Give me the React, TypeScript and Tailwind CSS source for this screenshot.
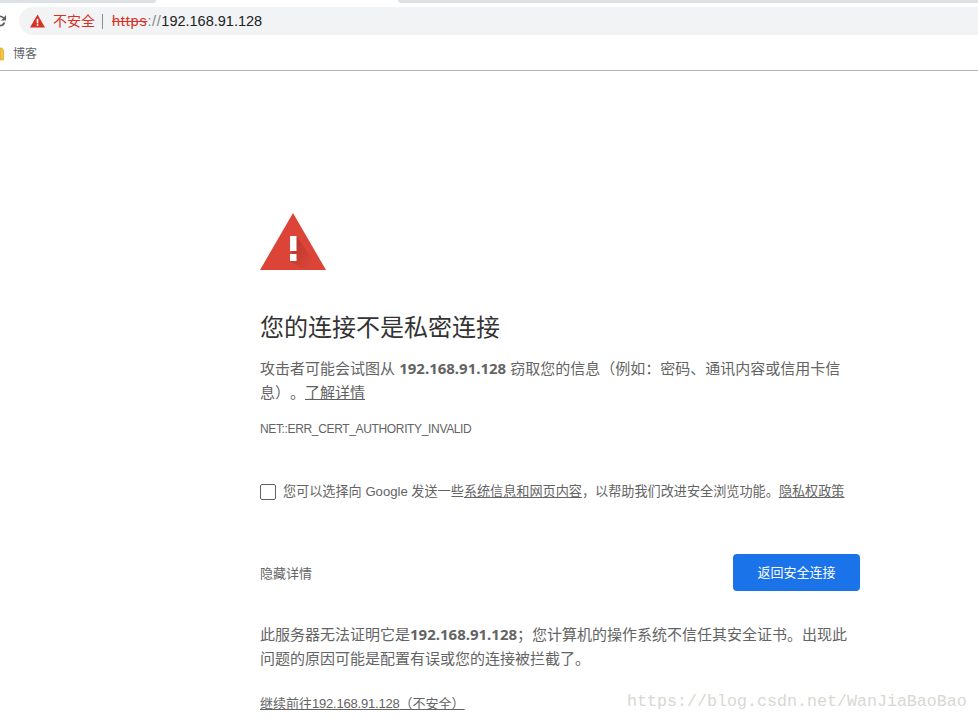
export default function App() {
  const cjk = '"Liberation Sans","Noto Sans CJK SC",sans-serif';
  const bold = '"Noto Sans","Noto Sans CJK SC",sans-serif';
  return (
    <div className="relative w-[978px] h-[721px] overflow-hidden bg-white [text-spacing-trim:space-all]" style={{ fontFamily: cjk }}>
      {/* Browser chrome */}
      <div className="h-[71px] border-b border-[#b3b3b3] bg-white">
        <div className="flex justify-between h-[3px]">
          <div className="w-[156px] rounded-br-md bg-[#dee1e6]" />
          <div className="w-[580px] rounded-bl-md bg-[#dee1e6]" />
        </div>
        <div className="flex items-center h-[28px] mt-[4px]">
          <div className="w-[19px] flex items-center">
            <svg width="6" height="14" viewBox="0 0 6 14" className="block">
              <path d="M0 1.5a5.5 5.5 0 0 1 4 1.7L6 1v5.5H0.8L3 4.6A3.6 3.6 0 0 0 0 3.3ZM0 12.5v-1.8a3.6 3.6 0 0 0 3.4-2.3h2A5.5 5.5 0 0 1 0 12.5Z" fill="#5f6368" />
            </svg>
          </div>
          <div className="flex-1 h-[28px] rounded-l-[14px] bg-[#f1f3f4] flex items-center pl-[11px]">
            <svg width="15" height="14" viewBox="0 0 15 14" className="block shrink-0">
              <path d="M7.5 0.5 15 13.5H0Z" fill="#d93025" />
              <rect x="6.7" y="4.8" width="1.6" height="4.6" fill="#fff" />
              <rect x="6.7" y="10.2" width="1.6" height="1.6" fill="#fff" />
            </svg>
            <span className="ml-[8px] text-[14px] leading-none text-[#d93025]">不安全</span>
            <span className="ml-[7px] w-px h-[15px] bg-[#8a8d91]" />
            <span className="ml-[9px] text-[14.5px] leading-none">
              <span className="text-[#d93025] line-through tracking-[0.8px]">https</span>
              <span className="text-[#80868b] tracking-[0.6px]">://</span>
              <span className="text-[#202124]">192.168.91.128</span>
            </span>
          </div>
        </div>
        <div className="flex items-center h-[35px] pt-[3px]">
          <svg width="4" height="14" viewBox="0 0 4 14" className="block">
            <path d="M0 1h2l1.5 2V13H0Z" fill="#f5c542" stroke="#c9a227" strokeWidth="0.6" />
          </svg>
          <span className="ml-[9px] text-[12px] leading-none text-[#5f6368]">博客</span>
        </div>
      </div>

      {/* Interstitial */}
      <main className="ml-[260px] w-[600px] pt-[142px]">
        <svg width="66" height="58" viewBox="0 0 66 58" className="block">
          <defs>
            <linearGradient id="sh" x1="0.1" y1="0.1" x2="0.9" y2="0.9">
              <stop offset="0" stopColor="#b3352b" stopOpacity="0.9" />
              <stop offset="1" stopColor="#b3352b" stopOpacity="0" />
            </linearGradient>
          </defs>
          <path d="M33 0 66 57H0Z" fill="#db4437" />
          <path d="M36.5 23 52 46V57H45L30 48Z" fill="url(#sh)" />
          <rect x="30" y="23" width="6.5" height="15" fill="#fff" />
          <rect x="30" y="41" width="6.5" height="7" fill="#fff" />
        </svg>

        <h1 className="mt-[39px] text-[24px] leading-[36px] font-normal text-[#333]">您的连接不是私密连接</h1>

        <p className="mt-[10px] text-[15px] leading-[24px] text-[#646464]">
          攻击者可能会试图从 <b className="font-bold" style={{ fontFamily: bold }}>192.168.91.128</b> 窃取您的信息（例如：密码、通讯内容或信用卡信息）。<span className="underline text-[#5f5f5f]">了解详情</span>
        </p>

        <p className="mt-[16px] text-[12px] leading-[16px] tracking-[-0.35px] text-[#646464]">NET::ERR_CERT_AUTHORITY_INVALID</p>

        <div className="mt-[45px] flex items-center h-[20px]">
          <span className="w-[16px] h-[16px] rounded-[2px] border border-[#5f6368] bg-white shrink-0" />
          <p className="ml-[7px] text-[13.14px] whitespace-nowrap text-[#646464]">
            您可以选择向 Google 发送一些<span className="underline">系统信息和网页内容</span>，以帮助我们改进安全浏览功能。<span className="underline">隐私权政策</span>
          </p>
        </div>

        <div className="mt-[52px] flex items-center justify-between">
          <span className="pt-[2px] text-[13px] text-[#646464]">隐藏详情</span>
          <button className="w-[127px] h-[37px] rounded-[4px] bg-[#1a73e8] text-white text-[13px]">返回安全连接</button>
        </div>

        <p className="mt-[31px] text-[15px] leading-[24px] text-[#646464]">
          此服务器无法证明它是<b className="font-bold" style={{ fontFamily: bold }}>192.168.91.128</b>；您计算机的操作系统不信任其安全证书。出现此问题的原因可能是配置有误或您的连接被拦截了。
        </p>

        <p className="mt-[23px] text-[13px] leading-[20px] text-[#646464]">
          <span className="underline">继续前往<span className="tracking-[-0.2px]">192.168.91.128</span>（不安全）</span>
        </p>
      </main>

      {/* Watermark */}
      <div className="absolute left-[627px] top-[690px] text-[16.67px] leading-[24px] text-[#d8d8d2] whitespace-nowrap" style={{ fontFamily: '"Liberation Mono",monospace' }}>
        https://blog.csdn.net/WanJiaBaoBao
      </div>
    </div>
  );
}
